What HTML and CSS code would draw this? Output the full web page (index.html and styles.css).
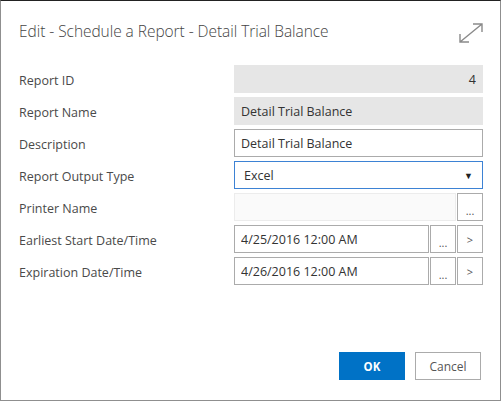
FILE: index.html
```html
<!DOCTYPE html>
<html lang="en">
<head>
    <meta charset="UTF-8">
    <meta name="viewport" content="width=device-width, initial-scale=1.0">
    <title>Edit - Schedule a Report</title>
    <link rel="stylesheet" href="styles.css">
</head>
<body>
    <div class="dialog">
        <div class="dialog-header">
            <h1 class="dialog-title">Edit - Schedule a Report - Detail Trial Balance</h1>
            <svg class="expand-icon" width="26" height="22" viewBox="0 0 26 22">
                <path d="M2 20 L24 2 M15 2 H24 V10 M2 12 V20 H11" fill="none" stroke="#8a8a8a" stroke-width="1.4"/>
            </svg>
        </div>
        <div class="form">
            <label class="form-label">Report ID</label>
            <input class="field disabled align-right" type="text" value="4" readonly>

            <label class="form-label">Report Name</label>
            <input class="field disabled" type="text" value="Detail Trial Balance" readonly>

            <label class="form-label">Description</label>
            <input class="field" type="text" value="Detail Trial Balance">

            <label class="form-label">Report Output Type</label>
            <div class="field select">
                <span>Excel</span>
                <span class="select-arrow">&#9660;</span>
            </div>

            <label class="form-label">Printer Name</label>
            <div class="field-group">
                <input class="field empty" type="text" readonly>
                <button class="small-button">...</button>
            </div>

            <label class="form-label">Earliest Start Date/Time</label>
            <div class="field-group">
                <input class="field" type="text" value="4/25/2016 12:00 AM">
                <button class="small-button">...</button>
                <button class="small-button arrow">&gt;</button>
            </div>

            <label class="form-label">Expiration Date/Time</label>
            <div class="field-group">
                <input class="field" type="text" value="4/26/2016 12:00 AM">
                <button class="small-button">...</button>
                <button class="small-button arrow">&gt;</button>
            </div>
        </div>
        <div class="dialog-footer">
            <button class="button primary">OK</button>
            <button class="button">Cancel</button>
        </div>
    </div>
</body>
</html>
```

FILE: styles.css
```css
body {
    margin: 0;
    background: #ffffff;
    font-family: 'Open Sans', 'Noto Sans', sans-serif;
    color: #444444;
}

.dialog {
    box-sizing: border-box;
    width: 501px;
    height: 401px;
    border: 1px solid #8f8f8f;
    border-top-color: #222222;
    background: #ffffff;
    display: flex;
    flex-direction: column;
}

.dialog-header {
    display: flex;
    justify-content: space-between;
    align-items: center;
    padding: 16px 16px 0 18px;
    height: 28px;
    margin-bottom: 20px;
}

.dialog-title {
    margin: 0;
    font-size: 15.5px;
    font-weight: 300;
    color: #444444;
    letter-spacing: -0.05px;
}

.expand-icon {
    margin-top: 4px;
}

.form {
    display: grid;
    grid-template-columns: 215px 249px;
    grid-auto-rows: 28px;
    row-gap: 4px;
    padding-left: 18px;
}

.form-label {
    padding-top: 2px;
    font-size: 12.5px;
    line-height: 28px;
    color: #4a4a4a;
}

.field {
    box-sizing: border-box;
    width: 100%;
    height: 28px;
    margin: 0;
    padding: 0 6px;
    border: 1px solid #ababab;
    background: #ffffff;
    font-family: 'Open Sans', 'Noto Sans', sans-serif;
    font-size: 12.5px;
    color: #333333;
    outline: none;
}

.field.disabled {
    border-color: #e6e6e6;
    background: #e6e6e6;
}

.field.empty {
    border-color: #ececec;
    background: #fafafa;
}

.align-right {
    text-align: right;
}

.select {
    display: flex;
    justify-content: space-between;
    align-items: center;
    padding: 0 9px;
    border-color: #3d82d4;
}

.select-arrow {
    font-size: 9px;
    color: #222222;
}

.field-group {
    display: flex;
    gap: 1px;
}

.field-group .field {
    flex: 1;
    min-width: 0;
}

.small-button {
    box-sizing: border-box;
    flex: none;
    width: 26px;
    height: 28px;
    margin: 0;
    padding: 6px 0 0;
    border: 1px solid #ababab;
    background: #ffffff;
    font-family: 'Open Sans', 'Noto Sans', sans-serif;
    font-size: 11px;
    color: #555555;
}

.small-button.arrow {
    padding-top: 0;
    font-size: 11px;
}

.dialog-footer {
    display: flex;
    justify-content: flex-end;
    gap: 10px;
    margin-top: auto;
    padding: 0 19px 20px 0;
}

.button {
    box-sizing: border-box;
    width: 66px;
    height: 28px;
    border: 1px solid #ababab;
    background: #ffffff;
    font-family: 'Open Sans', 'Noto Sans', sans-serif;
    font-size: 12px;
    color: #555555;
}

.button.primary {
    border-color: #0072c6;
    background: #0072c6;
    color: #ffffff;
    font-weight: 700;
    font-size: 11.5px;
}
```
